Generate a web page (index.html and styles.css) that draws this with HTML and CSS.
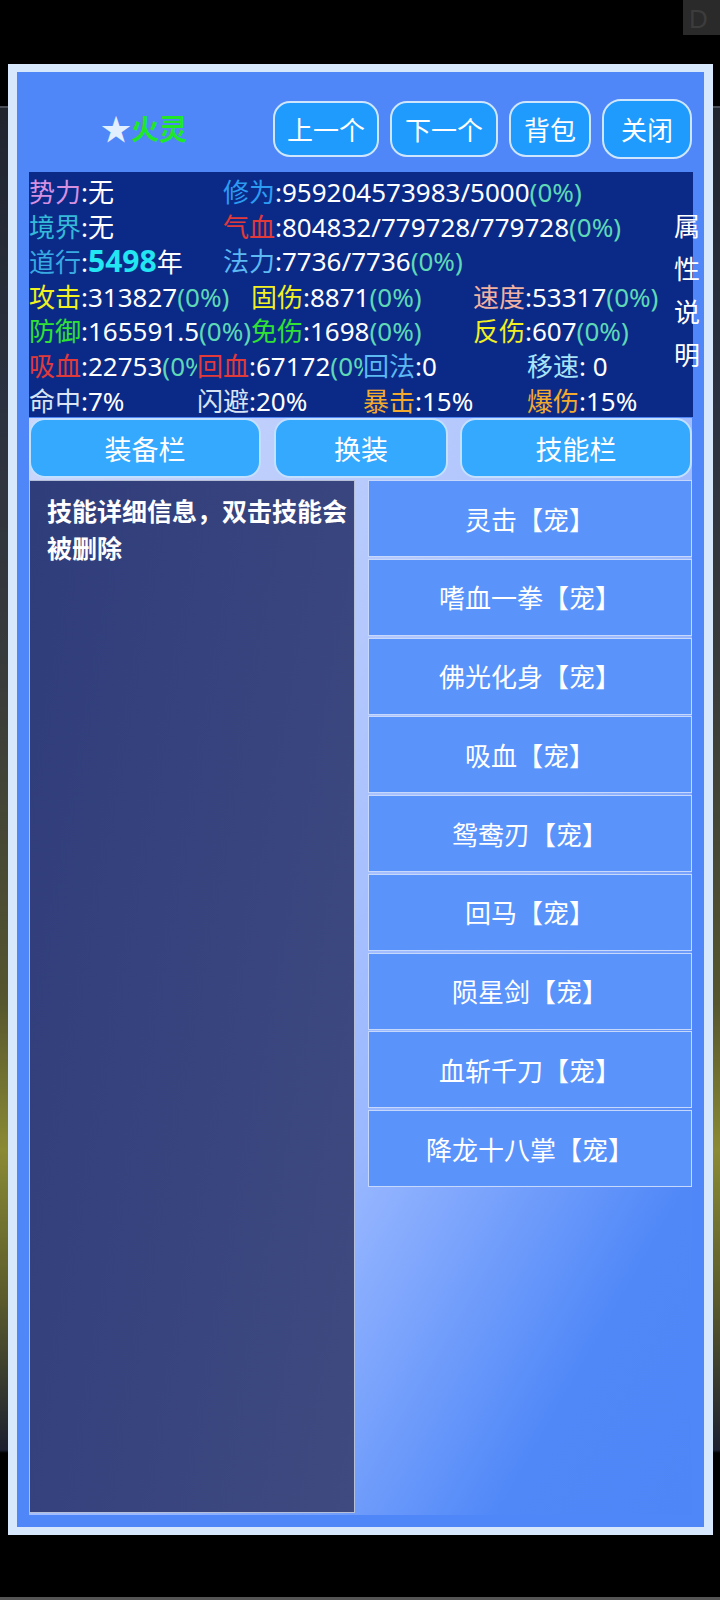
FILE: index.html
```html
<!DOCTYPE html>
<html lang="zh-CN">
<head>
<meta charset="utf-8">
<title>宠物属性</title>
<link rel="stylesheet" href="styles.css">
</head>
<body>
<div class="screen">
  <div class="topbar"><div class="corner">D</div></div>
  <div class="panel">
    <div class="header">
      <div class="title"><span class="star">★</span><span class="name">火灵</span></div>
      <div class="btns">
        <div class="btn b-prev">上一个</div>
        <div class="btn b-next">下一个</div>
        <div class="btn b-bag">背包</div>
        <div class="btn b-close">关闭</div>
      </div>
    </div>
    <div class="stats">
      <div class="row r2">
        <div class="cell"><span class="c-shili">势力</span>:无</div>
        <div class="cell"><span class="c-xiuwei">修为</span>:959204573983/5000<span class="pct">(0%)</span></div>
      </div>
      <div class="row r2">
        <div class="cell"><span class="c-jingjie">境界</span>:无</div>
        <div class="cell"><span class="c-red">气血</span>:804832/779728/779728<span class="pct">(0%)</span></div>
      </div>
      <div class="row r2">
        <div class="cell"><span class="c-daoxing">道行</span>:<span class="big">5498</span>年</div>
        <div class="cell"><span class="c-fali">法力</span>:7736/7736<span class="pct">(0%)</span></div>
      </div>
      <div class="row r3">
        <div class="cell"><span class="c-yellow">攻击</span>:313827<span class="pct">(0%)</span></div>
        <div class="cell"><span class="c-yellow">固伤</span>:8871<span class="pct">(0%)</span></div>
        <div class="cell"><span class="c-peach">速度</span>:53317<span class="pct">(0%)</span></div>
      </div>
      <div class="row r3">
        <div class="cell"><span class="c-green">防御</span>:165591.5<span class="pct">(0%)</span></div>
        <div class="cell"><span class="c-green">免伤</span>:1698<span class="pct">(0%)</span></div>
        <div class="cell"><span class="c-yellow">反伤</span>:607<span class="pct">(0%)</span></div>
      </div>
      <div class="row r4">
        <div class="cell"><span class="c-red">吸血</span>:22753<span class="pct">(0%)</span></div>
        <div class="cell"><span class="c-red">回血</span>:67172<span class="pct">(0%)</span></div>
        <div class="cell"><span class="c-fali">回法</span>:0</div>
        <div class="cell"><span class="c-cyan">移速</span>: 0</div>
      </div>
      <div class="row r4">
        <div class="cell"><span class="c-light">命中</span>:7%</div>
        <div class="cell"><span class="c-light">闪避</span>:20%</div>
        <div class="cell"><span class="c-orange">暴击</span>:15%</div>
        <div class="cell"><span class="c-orange">爆伤</span>:15%</div>
      </div>
      <div class="vlabel">属性说明</div>
    </div>
    <div class="body">
      <div class="tabs">
        <div class="tab t-wide">装备栏</div>
        <div class="tab t-mid">换装</div>
        <div class="tab t-wide">技能栏</div>
      </div>
      <div class="content">
        <div class="detail">技能详细信息，双击技能会被删除</div>
        <div class="skills">
          <div class="skill">灵击【宠】</div>
          <div class="skill">嗜血一拳【宠】</div>
          <div class="skill">佛光化身【宠】</div>
          <div class="skill">吸血【宠】</div>
          <div class="skill">鸳鸯刃【宠】</div>
          <div class="skill">回马【宠】</div>
          <div class="skill">陨星剑【宠】</div>
          <div class="skill">血斩千刀【宠】</div>
          <div class="skill">降龙十八掌【宠】</div>
        </div>
      </div>
    </div>
  </div>
</div>
</body>
</html>
```

FILE: styles.css
```css
html, body {
  margin: 0;
  padding: 0;
  background: #000;
}

.screen {
  width: 720px;
  height: 1600px;
  overflow: hidden;
  font-family: "Noto Sans", "Noto Sans CJK SC", sans-serif;
  color: #fff;
  background:
    linear-gradient(to bottom,
      #000 0px, #000 106px,
      #4a4e56 106px, #4a4e56 108px,
      #20252e 108px, #2b3140 400px,
      #3a3d3a 700px, #55552e 1000px,
      #8a8a34 1150px, #5a5a2c 1300px,
      #1c2030 1450px, #000 1453px,
      #000 1597px, #555 1597px, #555 1600px);
}

.topbar {
  height: 64px;
  display: flex;
  justify-content: flex-end;
  align-items: flex-start;
}

.corner {
  width: 37px;
  height: 35px;
  background: #2a2a2a;
  color: #3c3c3c;
  font-family: "Liberation Sans", sans-serif;
  font-size: 26px;
  line-height: 38px;
  padding-left: 6px;
  box-sizing: border-box;
}

.panel {
  margin-left: 8px;
  width: 705px;
  height: 1471px;
  box-sizing: border-box;
  border-style: solid;
  border-color: #d8e8fc;
  border-width: 8px 9px;
  background: #5087f8;
  padding: 0 12px 12px;
}

/* header */
.header {
  display: flex;
  align-items: center;
  padding: 27px 0 13px;
  height: 100px;
  box-sizing: border-box;
}

.title {
  width: 230px;
  text-align: center;
  font-size: 28px;
  line-height: 40px;
}

.star {
  color: #e2efff;
  font-size: 30px;
}

.name {
  color: #1fe826;
  font-weight: 700;
}

.btns {
  margin-left: 14px;
  display: flex;
  align-items: center;
  gap: 11px;
}

.btn {
  height: 56px;
  box-sizing: border-box;
  border: 2px solid #cfe6ff;
  border-radius: 17px;
  background: #1e9bfd;
  color: #fff;
  font-size: 26px;
  display: flex;
  align-items: center;
  justify-content: center;
}

.b-prev { width: 106px; }
.b-next { width: 108px; }
.b-bag { width: 82px; }
.b-close { width: 90px; height: 60px; border-radius: 19px; }

/* stats */
.stats {
  position: relative;
  width: 664px;
  height: 245px;
  box-sizing: border-box;
  padding-top: 3px;
  background: #0b2a88;
  font-size: 26px;
  line-height: 34.6px;
  color: #fff;
}

.row {
  display: grid;
  white-space: nowrap;
}

.r2 { grid-template-columns: 194px 1fr; }
.r3 { grid-template-columns: 222px 222px 1fr; }
.r4 { grid-template-columns: 168px 166px 164px 1fr; }

.cell {
  overflow: hidden;
}

.pct { color: #5fd8b6; }
.big {
  color: #22e6f2;
  font-weight: 700;
  font-size: 30px;
}

.c-shili { color: #d690e2; }
.c-xiuwei { color: #2c9cf2; }
.c-jingjie { color: #35b9d9; }
.c-daoxing { color: #39a9e2; }
.c-fali { color: #5cb9f2; }
.c-red { color: #e23a3a; }
.c-yellow { color: #f0f022; }
.c-peach { color: #f2b2a2; }
.c-green { color: #30e234; }
.c-cyan { color: #a8e4f8; }
.c-light { color: #d8e4f4; }
.c-orange { color: #f2aa2e; }

.vlabel {
  position: absolute;
  left: 645px;
  top: 33px;
  width: 27px;
  font-size: 26px;
  line-height: 43px;
  color: #fff;
  word-break: break-all;
}

/* body */
.body {
  margin-top: 1px;
  padding-bottom: 2px;
  background: linear-gradient(120deg, #cbd6fb 0%, #b4c8fd 35%, #9ab8ff 58%, #5088f8 85%, #4f86f7 100%);
}

.tabs {
  display: flex;
  gap: 12px;
  height: 60px;
}

.tab {
  box-sizing: border-box;
  border: 2px solid #c3e0ff;
  border-radius: 16px;
  background: #34a9fd;
  color: #fff;
  font-size: 27px;
  display: flex;
  align-items: center;
  justify-content: center;
}

.t-wide { width: 232px; }
.t-mid { width: 174px; margin-left: 1px; }

.content {
  margin-top: 2px;
  display: flex;
  gap: 13px;
  height: 1033px;
}

.detail {
  width: 326px;
  height: 1033px;
  box-sizing: border-box;
  border: 1px solid #b6bfd8;
  background: linear-gradient(100deg, #2f3d7b 0%, #38447e 55%, #3f4a80 100%);
  padding: 12px 0 0 17px;
  font-size: 25px;
  font-weight: 700;
  line-height: 37px;
  color: #fff;
}

.skills {
  width: 324px;
  display: flex;
  flex-direction: column;
  gap: 1.75px;
}

.skill {
  height: 77px;
  box-sizing: border-box;
  border: 1px solid #c6d9fc;
  background: #5a94fb;
  color: #fff;
  font-size: 26px;
  display: flex;
  align-items: center;
  justify-content: center;
}
```
